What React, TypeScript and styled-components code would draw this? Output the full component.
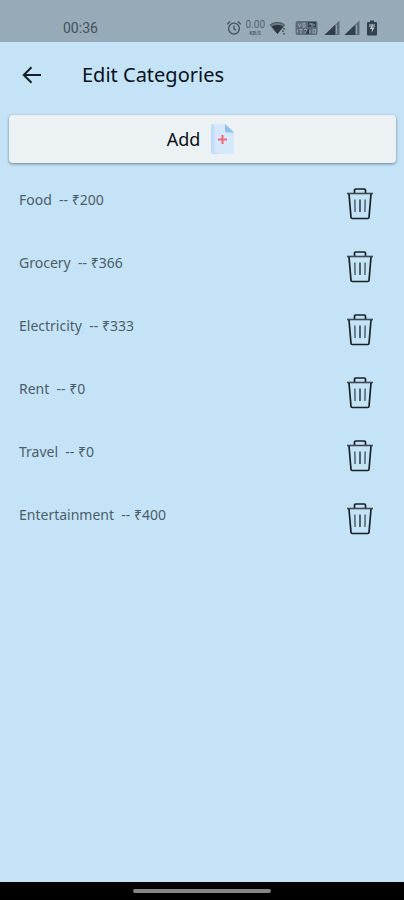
import React from 'react';
import styled, { createGlobalStyle } from 'styled-components';

interface Category {
  name: string;
  amount: number;
}

const categories: Category[] = [
  { name: 'Food', amount: 200 },
  { name: 'Grocery', amount: 366 },
  { name: 'Electricity', amount: 333 },
  { name: 'Rent', amount: 0 },
  { name: 'Travel', amount: 0 },
  { name: 'Entertainment', amount: 400 },
];

const AlarmIcon = () => (
  <svg width="16" height="16" viewBox="0 0 16 16" fill="none" stroke="#43525e" strokeWidth="1.3">
    <circle cx="8" cy="8.6" r="5.4" />
    <path d="M8 5.4v3.4l2.2 1.4M1.2 4.2 4.2 1.6M14.8 4.2l-3-2.6" />
  </svg>
);

const WifiIcon = () => (
  <svg width="18" height="16" viewBox="0 0 18 16">
    <path d="M0.5 5.2C5 0.8 12 0.8 16.2 5.2L8.4 14z" fill="#6a7a87" />
    <path d="M2.4 6.4c3.6-2 8.4-2 12 0L8.4 14z" fill="#2c3740" />
    <path d="M1 5.2C5.2 1.6 11.6 1.6 15.8 5.2" fill="none" stroke="#43525e" />
    <path d="M14 8h2v1.500h-2zM13 10.5h2V12h-2zM14 13h2v1.500h-2z" fill="#52616d" />
  </svg>
);

const VolteIcon = () => (
  <svg width="23" height="16" viewBox="0 0 23 16">
    <rect x="0.5" y="1" width="22" height="14" rx="2" fill="#5d6c78" />
    <path d="M13 2h8v5h-8zM10 9h4v5h-4z" fill="#35424c" />
    <path
      d="M3 3.5 4.5 7 6 3.5M8 3.5h2V7H8zM2.5 12.5v-3M4.5 9.5h3M6 9.5v4M9 9.5h3l-2 4M14 4h3M17 3v4M19 4v2M15 10v3M18 9.5h2.5v3.5H18z"
      fill="none"
      stroke="#93a5b3"
    />
  </svg>
);

const SignalIcon = () => (
  <svg width="16" height="16" viewBox="0 0 16 16">
    <path d="M15.5 0.5V15H0.5z" fill="#5e6d79" />
    <path d="M11 5V15H0.5z" fill="#323e48" />
    <path d="M12.5 5v9" stroke="#8fa1ae" />
  </svg>
);

const BatteryIcon = () => (
  <svg width="12" height="16" viewBox="0 0 12 16">
    <path d="M4 0.5h4V2h2a1 1 0 0 1 1 1v11.5a1 1 0 0 1-1 1H2a1 1 0 0 1-1-1V3a1 1 0 0 1 1-1h2z" fill="#35424c" />
    <path d="M3 4h6v3H3z" fill="#7b8c99" />
    <path d="M7 3.5 3.8 9H6l-.6 4L8.600 7.500H6.200z" fill="#b4c6d3" />
  </svg>
);

const BackIcon = () => (
  <svg width="24" height="24" viewBox="0 0 24 24" fill="none" stroke="#15202a" strokeWidth="2">
    <path d="M21 12H4.500M11.500 4.300 3.800 12l7.700 7.700" />
  </svg>
);

const AddFileIcon = () => (
  <svg width="26" height="32" viewBox="0 0 26 32">
    <path d="M3 1h13l8 8v20a2 2 0 0 1-2 2H3a2 2 0 0 1-2-2V3a2 2 0 0 1 2-2z" fill="#d5e8fc" />
    <path d="M3 1h1.500v27l3 3H3a2 2 0 0 1-2-2V3a2 2 0 0 1 2-2z" fill="#c2dcf8" />
    <path d="M15 1l9 8.500h-7a2 2 0 0 1-2-2z" fill="#8fc0ee" />
    <path d="M12.500 12v9M8 16.500h9" stroke="#f0677a" strokeWidth="2" />
  </svg>
);

const TrashIcon = () => (
  <svg width="28" height="34" viewBox="0 0 28 34" fill="none">
    <path d="M8.500 6V3.200Q8.500 2 9.700 2h8.600q1.200 0 1.200 1.200V6" stroke="#17212a" strokeWidth="1.700" />
    <path d="M1 6.500h26" stroke="#3c4a56" strokeWidth="1.600" />
    <path d="M3 7l2 23.500q.1 1 1.200 1h15.600q1.100 0 1.200-1L25 7" stroke="#17212a" strokeWidth="1.700" />
    <path d="M8.800 12.500l.3 12.500M19.200 12.500l-.3 12.500" stroke="#60717f" strokeWidth="1.700" />
    <path d="M14 12.500v12.500" stroke="#34424e" strokeWidth="1.600" />
  </svg>
);

const App: React.FC = () => {
  return (
    <Screen>
      <GlobalStyle />
      <StatusBar>
        <Clock>00:36</Clock>
        <StatusIcons>
          <AlarmIcon />
          <NetSpeed>
            <span>0.00</span>
            <small>KB/S</small>
          </NetSpeed>
          <WifiIcon />
          <Sims>
            <VolteIcon />
            <SignalIcon />
            <SignalIcon />
          </Sims>
          <BatteryIcon />
        </StatusIcons>
      </StatusBar>
      <Header>
        <BackButton type="button" aria-label="Back">
          <BackIcon />
        </BackButton>
        <Title>Edit Categories</Title>
      </Header>
      <Content>
        <AddButton type="button">
          Add
          <AddFileIcon />
        </AddButton>
        <CategoryList>
          {categories.map(({ name, amount }) => (
            <CategoryRow key={name}>
              <CategoryText>{`${name}  -- ₹${amount}`}</CategoryText>
              <DeleteButton type="button" aria-label={`Delete ${name}`}>
                <TrashIcon />
              </DeleteButton>
            </CategoryRow>
          ))}
        </CategoryList>
      </Content>
      <NavBar>
        <NavHandle />
      </NavBar>
    </Screen>
  );
};

export default App;

const GlobalStyle = createGlobalStyle`
  * {
    box-sizing: border-box;
  }

  body {
    margin: 0;
    font-family: 'Noto Sans', sans-serif;
    background: #c5e3f6;
  }

  button {
    font-family: inherit;
    border: none;
    cursor: pointer;
  }

  svg {
    display: block;
    flex-shrink: 0;
  }
`;

const Screen = styled.div`
  min-height: 100vh;
  display: flex;
  flex-direction: column;
  background: #c5e3f6;
`;

const StatusBar = styled.div`
  height: 42px;
  display: flex;
  justify-content: space-between;
  align-items: flex-end;
  padding: 0 26px 6px 63px;
  background: #97aab8;
`;

const Clock = styled.span`
  font-family: Roboto, sans-serif;
  font-size: 14px;
  line-height: 16px;
  color: #43525e;
`;

const StatusIcons = styled.div`
  display: flex;
  align-items: center;
  gap: 4px;
`;

const Sims = styled.div`
  display: flex;
  gap: 4px;
  margin: 0 2px 0 4px;

  svg:first-child {
    margin-right: 2px;
  }
`;

const NetSpeed = styled.div`
  display: flex;
  flex-direction: column;
  align-items: center;
  font-family: Roboto, sans-serif;
  font-size: 10px;
  line-height: 11px;
  color: #52616d;

  small {
    font-size: 5px;
    line-height: 6px;
    font-weight: 700;
  }
`;

const Header = styled.header`
  height: 64px;
  display: flex;
  align-items: center;
  gap: 38px;
  padding: 2px 20px 0;
`;

const BackButton = styled.button`
  padding: 0;
  background: none;
`;

const Title = styled.h1`
  margin: 0;
  font-size: 20px;
  line-height: 28px;
  font-weight: 400;
  color: #08111a;
`;

const Content = styled.main`
  flex: 1;
  padding: 9px 8px 0 9px;
`;

const AddButton = styled.button`
  width: 100%;
  height: 48px;
  display: flex;
  justify-content: center;
  align-items: center;
  gap: 10px;
  padding: 0 2px 0 0;
  border-radius: 4px;
  background: #ecf1f4;
  box-shadow: 0 1px 3px rgba(40, 60, 75, 0.6);
  font-size: 18px;
  line-height: 24px;
  color: #08111a;
`;

const CategoryList = styled.ul`
  margin: 0;
  padding: 0;
  list-style: none;
`;

const CategoryRow = styled.li`
  height: 63px;
  display: flex;
  justify-content: space-between;
  align-items: flex-start;
  padding: 24px 22px 0 10px;
`;

const CategoryText = styled.span`
  padding-top: 3px;
  font-size: 14px;
  line-height: 20px;
  white-space: pre;
  color: #4a5d6b;
`;

const DeleteButton = styled.button`
  padding: 0;
  background: none;
`;

const NavBar = styled.div`
  height: 18px;
  display: flex;
  justify-content: center;
  align-items: center;
  background: #000000;
`;

const NavHandle = styled.div`
  width: 34%;
  height: 4px;
  border-radius: 2px;
  background: #858585;
`;
